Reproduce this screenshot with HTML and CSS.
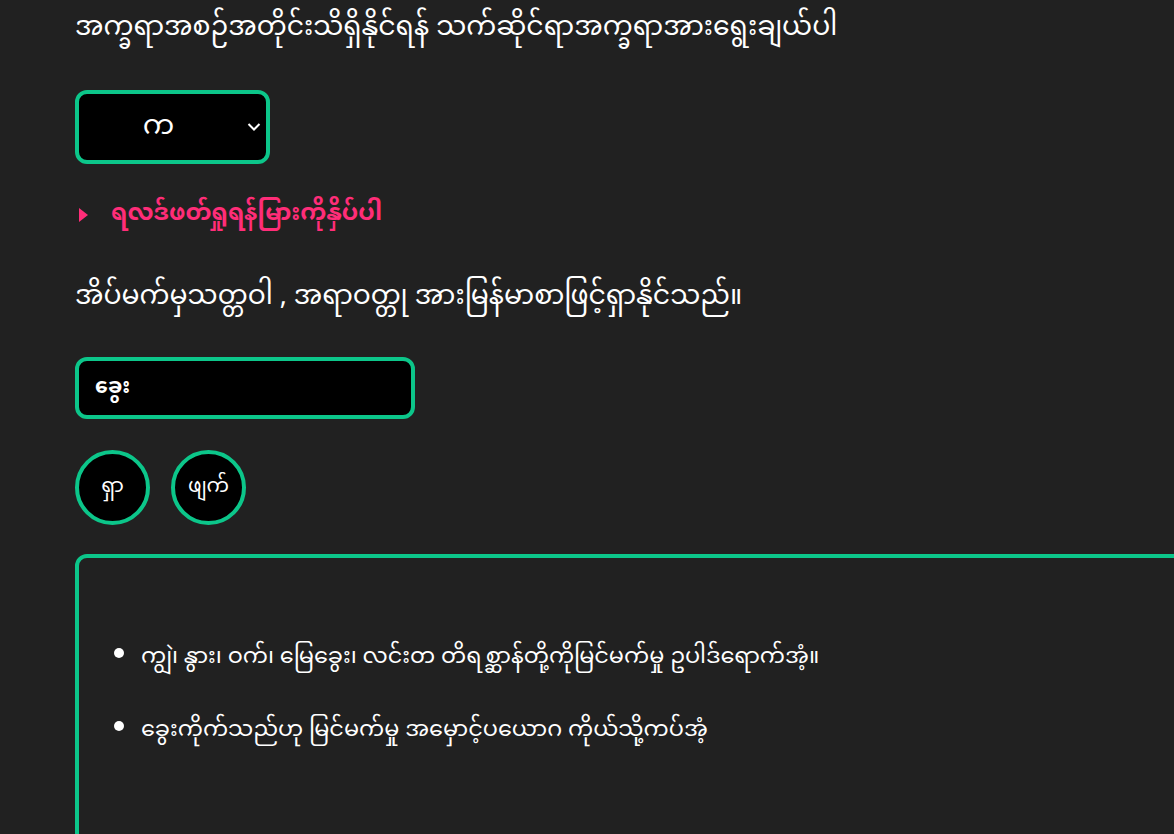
FILE: index.html
```html
<!DOCTYPE html>
<html lang="my">
<head>
<meta charset="utf-8">
<title>အိပ်မက်</title>
<link rel="stylesheet" href="styles.css">
</head>
<body>
<main class="page">
  <h1 class="title">အက္ခရာအစဉ်အတိုင်းသိရှိနိုင်ရန် သက်ဆိုင်ရာအက္ခရာအားရွေးချယ်ပါ</h1>
  <div class="select-wrap">
    <select class="letter-select">
      <option>က</option>
    </select>
    <svg class="chevron" width="14" height="10" viewBox="0 0 14 10"><path d="M1.5 2 L7 7.5 L12.5 2" fill="none" stroke="#fff" stroke-width="2"/></svg>
  </div>
  <details class="results">
    <summary class="summary"><span class="marker"></span><span>ရလဒ်ဖတ်ရှုရန်မြားကိုနှိပ်ပါ</span></summary>
  </details>
  <p class="intro">အိပ်မက်မှသတ္တဝါ , အရာဝတ္တု အားမြန်မာစာဖြင့်ရှာနိုင်သည်။</p>
  <input class="search" type="text" value="ခွေး">
  <div class="buttons">
    <button class="circle">ရှာ</button>
    <button class="circle">ဖျက်</button>
  </div>
  <section class="box">
    <ul class="list">
      <li>ကျွဲ၊ နွား၊ ဝက်၊ မြေခွေး၊ လင်းတ တိရစ္ဆာန်တို့ကိုမြင်မက်မှု ဥပါဒ်ရောက်အံ့။</li>
      <li>ခွေးကိုက်သည်ဟု မြင်မက်မှု အမှောင့်ပယောဂ ကိုယ်သို့ကပ်အံ့</li>
    </ul>
  </section>
</main>
</body>
</html>
```
FILE: styles.css
```css
html {
  overflow: hidden;
}
body {
  margin: 0;
  background: #212121;
  color: #ffffff;
  font-family: "Noto Sans Myanmar", "Noto Sans", "DejaVu Sans", sans-serif;
}
.page {
  padding: 0 0 0 75px;
  display: flex;
  flex-direction: column;
  align-items: flex-start;
}
.title {
  margin: 7px 0 0;
  font-size: 26.7px;
  font-weight: 400;
  line-height: 44px;
  white-space: nowrap;
}
.select-wrap {
  position: relative;
  margin-top: 39px;
}
.letter-select {
  appearance: none;
  -webkit-appearance: none;
  width: 195px;
  height: 74px;
  border: 4px solid #0cc68a;
  border-radius: 12px;
  background: #000;
  color: #fff;
  font-family: inherit;
  font-size: 28px;
  text-align: center;
  padding: 0 28px 0 0;
  outline: none;
}
.chevron {
  position: absolute;
  right: 9px;
  top: 32px;
}
.results {
  margin-top: 33px;
}
.summary {
  list-style: none;
  display: flex;
  align-items: center;
  gap: 23px;
  color: #ff2d78;
  font-weight: 700;
  font-size: 23.5px;
  line-height: 36px;
  cursor: pointer;
}
.summary::-webkit-details-marker {
  display: none;
}
.marker {
  width: 0;
  height: 0;
  margin-left: 4px;
  border-top: 7px solid transparent;
  border-bottom: 7px solid transparent;
  border-left: 9px solid #ff2d78;
}
.intro {
  margin: 43px 0 0;
  font-size: 26.7px;
  line-height: 44px;
  white-space: nowrap;
}
.search {
  margin-top: 37px;
  width: 340px;
  height: 62px;
  box-sizing: border-box;
  border: 4px solid #0cc68a;
  border-radius: 12px;
  background: #000;
  color: #fff;
  font-family: inherit;
  font-weight: 700;
  font-size: 20.5px;
  padding: 0 16px;
  outline: none;
}
.buttons {
  display: flex;
  gap: 21px;
  margin-top: 31px;
}
.circle {
  width: 75px;
  height: 75px;
  border-radius: 50%;
  border: 4px solid #0cc68a;
  background: #000;
  color: #fff;
  font-family: inherit;
  font-size: 20px;
  padding: 0;
}
.box {
  margin-top: 29px;
  width: 1150px;
  min-height: 400px;
  border: 4px solid #0cc68a;
  border-radius: 12px;
  box-sizing: border-box;
  padding: 80px 22px;
}
.list {
  margin: 0;
  padding-left: 40px;
  font-size: 22.4px;
  line-height: 40px;
}
.list li + li {
  margin-top: 33px;
}
```
